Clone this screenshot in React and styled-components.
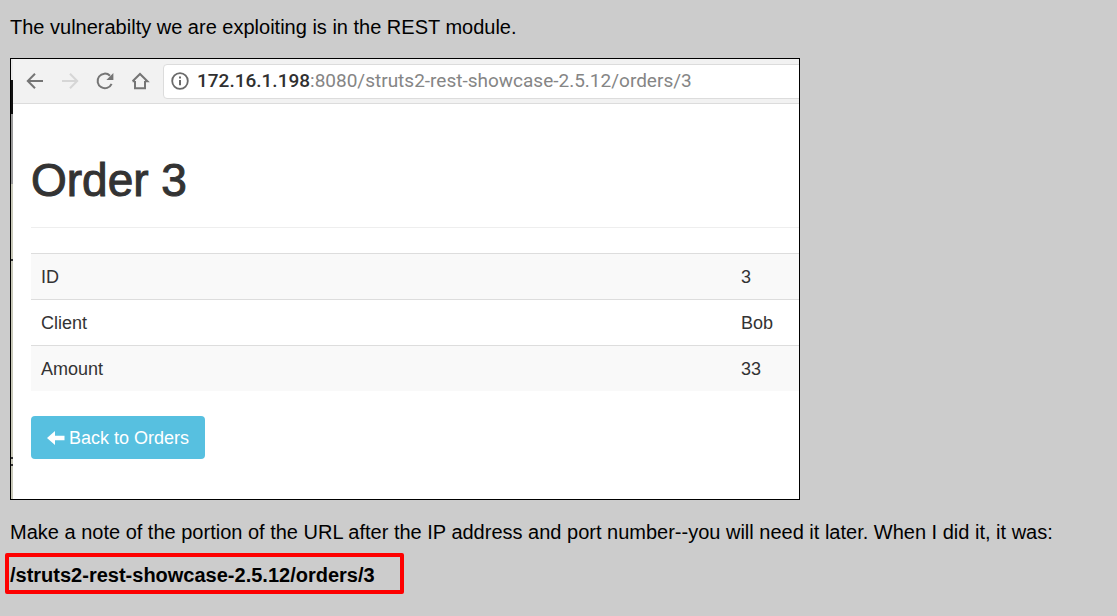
import React from "react";
import styled, { createGlobalStyle } from "styled-components";

const GlobalStyle = createGlobalStyle`
  *, *::before, *::after { box-sizing: border-box; }
  body {
    margin: 0;
    background: #cccccc;
    color: #000;
    font: 20px/24px "Liberation Sans", Arial, sans-serif;
  }
`;

const Page = styled.main`
  padding: 15px 5px;
`;

const Paragraph = styled.p`
  margin: 0;
  padding: 0 5px;
`;

const Figure = styled.figure`
  display: flex;
  width: 790px;
  max-width: calc(100% - 10px);
  margin: 19px 5px 20px;
  overflow: hidden;
  border: 1px solid #000;
  background: #fff;
`;

const WindowEdge = styled.div`
  flex: none;
  width: 2px;
  background: linear-gradient(
    #e8e8e8 0 21px,
    #111 21px 55px,
    #9a9a9a 55px 125px,
    #c9c9b9 125px 200px,
    #333 200px 202px,
    #c9c9b9 202px 398px,
    #333 398px 400px,
    #c9c9b9 400px 405px,
    #333 405px 407px,
    #c9c9b9 407px
  );
`;

const BrowserWindow = styled.div`
  flex: 1;
  min-width: 0;
`;

const Toolbar = styled.div`
  display: flex;
  align-items: center;
  height: 45px;
  padding-left: 12px;
  background: #f2f2f2;
  border-bottom: 1px solid #dcdcdc;
`;

const ToolButton = styled.button`
  display: block;
  flex: none;
  width: 20px;
  height: 20px;
  margin-right: 15px;
  padding: 0;
  border: 0;
  background: none;
  color: ${(p) => (p.disabled ? "#d6d6d6" : "#757575")};

  svg { display: block; }
`;

const AddressBar = styled.div`
  display: flex;
  flex: 1;
  align-items: center;
  min-width: 0;
  height: 35px;
  margin-right: -6px;
  margin-left: -2px;
  padding-left: 6px;
  gap: 7px;
  border: 1px solid #dcdcdc;
  border-radius: 4px;
  background: #fff;
  color: #6a6a6a;

  svg { flex: none; }
`;

const Url = styled.span`
  color: #858585;
  font: 19px/24px Roboto, sans-serif;
  white-space: nowrap;
`;

const Host = styled.span`
  color: #303030;
  font-weight: 500;
`;

const Content = styled.div`
  padding: 51px 0 40px 18px;
  color: #333;
  font-size: 18px;
  line-height: 26px;
`;

const Title = styled.h1`
  margin: 0;
  padding-bottom: 22px;
  border-bottom: 1px solid #eee;
  font-size: 46px;
  font-weight: 400;
  line-height: 50px;
  -webkit-text-stroke: 1px #333;
`;

const OrderTable = styled.table`
  width: 100%;
  margin: 25px 0;
  border-collapse: separate;
  border-spacing: 0;
  text-align: left;
`;

const Row = styled.tr`
  background: ${(p) => (p.$striped ? "#f9f9f9" : "#fff")};
`;

const Label = styled.th`
  padding: 10px 10px 9px;
  border-top: 1px solid #ddd;
  font-weight: 400;
`;

const Value = styled.td`
  width: 68px;
  padding: 10px 10px 9px;
  border-top: 1px solid #ddd;
`;

const BackLink = styled.a`
  display: inline-flex;
  align-items: center;
  height: 43px;
  padding: 0 16px;
  gap: 4px;
  border-radius: 4px;
  background: #57c0e0;
  color: #fff;
  text-decoration: none;
  vertical-align: top;
`;

const Callout = styled.strong`
  display: inline-block;
  margin-top: 9px;
  padding: 6px 25px 3px 1px;
  border: 4px solid #fe0000;
  border-radius: 2px;
`;

const strokeProps = {
  width: 20,
  height: 20,
  viewBox: "0 0 20 20",
  fill: "none",
  stroke: "currentColor",
  strokeWidth: 2,
  "aria-hidden": true,
};

const BackIcon = () => (
  <svg {...strokeProps}>
    <path d="M18 10H3M10 2.7 2.8 10l7.2 7.3" />
  </svg>
);

const ForwardIcon = () => (
  <svg {...strokeProps}>
    <path d="M2 10h15M10 2.7l7.2 7.3-7.2 7.3" />
  </svg>
);

const ReloadIcon = () => (
  <svg {...strokeProps}>
    <path d="M16.6 12.8A7.3 7.3 0 1 1 15 4.7" />
    <path d="M18.4 2v7h-7z" fill="currentColor" stroke="none" />
  </svg>
);

const HomeIcon = () => (
  <svg {...strokeProps}>
    <path d="M5 10v7.3h10V10M2.6 10.3 10 3l7.4 7.3H15M5 10.3H2.6" />
  </svg>
);

const InfoIcon = () => (
  <svg {...strokeProps}>
    <circle cx="10" cy="10" r="7.8" strokeWidth="1.8" />
    <path d="M10 9v5.3M10 5.6v2" />
  </svg>
);

const ArrowLeftIcon = () => (
  <svg width="18" height="16" viewBox="0 0 18 16" fill="currentColor" aria-hidden="true">
    <path d="M0 8 8 1v4.8h9.5v4.4H8V15z" />
  </svg>
);

const order = [
  ["ID", "3"],
  ["Client", "Bob"],
  ["Amount", "33"],
];

export default function App() {
  return (
    <>
      <GlobalStyle />
      <Page>
        <Paragraph>The vulnerabilty we are exploiting is in the REST module.</Paragraph>
        <Figure>
          <WindowEdge />
          <BrowserWindow>
            <Toolbar>
              <ToolButton type="button" aria-label="Back"><BackIcon /></ToolButton>
              <ToolButton type="button" aria-label="Forward" disabled><ForwardIcon /></ToolButton>
              <ToolButton type="button" aria-label="Reload"><ReloadIcon /></ToolButton>
              <ToolButton type="button" aria-label="Home"><HomeIcon /></ToolButton>
              <AddressBar>
                <InfoIcon />
                <Url role="textbox" aria-label="Address" tabIndex={0}>
                  <Host>172.16.1.198</Host>:8080/struts2-rest-showcase-2.5.12/orders/3
                </Url>
              </AddressBar>
            </Toolbar>
            <Content>
              <Title>Order 3</Title>
              <OrderTable>
                <tbody>
                  {order.map(([label, value], i) => (
                    <Row key={label} $striped={i % 2 === 0}>
                      <Label scope="row">{label}</Label>
                      <Value>{value}</Value>
                    </Row>
                  ))}
                </tbody>
              </OrderTable>
              <BackLink href="#orders">
                <ArrowLeftIcon />
                Back to Orders
              </BackLink>
            </Content>
          </BrowserWindow>
        </Figure>
        <Paragraph>
          Make a note of the portion of the URL after the IP address and port number--you will need it later. When I did it, it was:
        </Paragraph>
        <Callout>/struts2-rest-showcase-2.5.12/orders/3</Callout>
      </Page>
    </>
  );
}
